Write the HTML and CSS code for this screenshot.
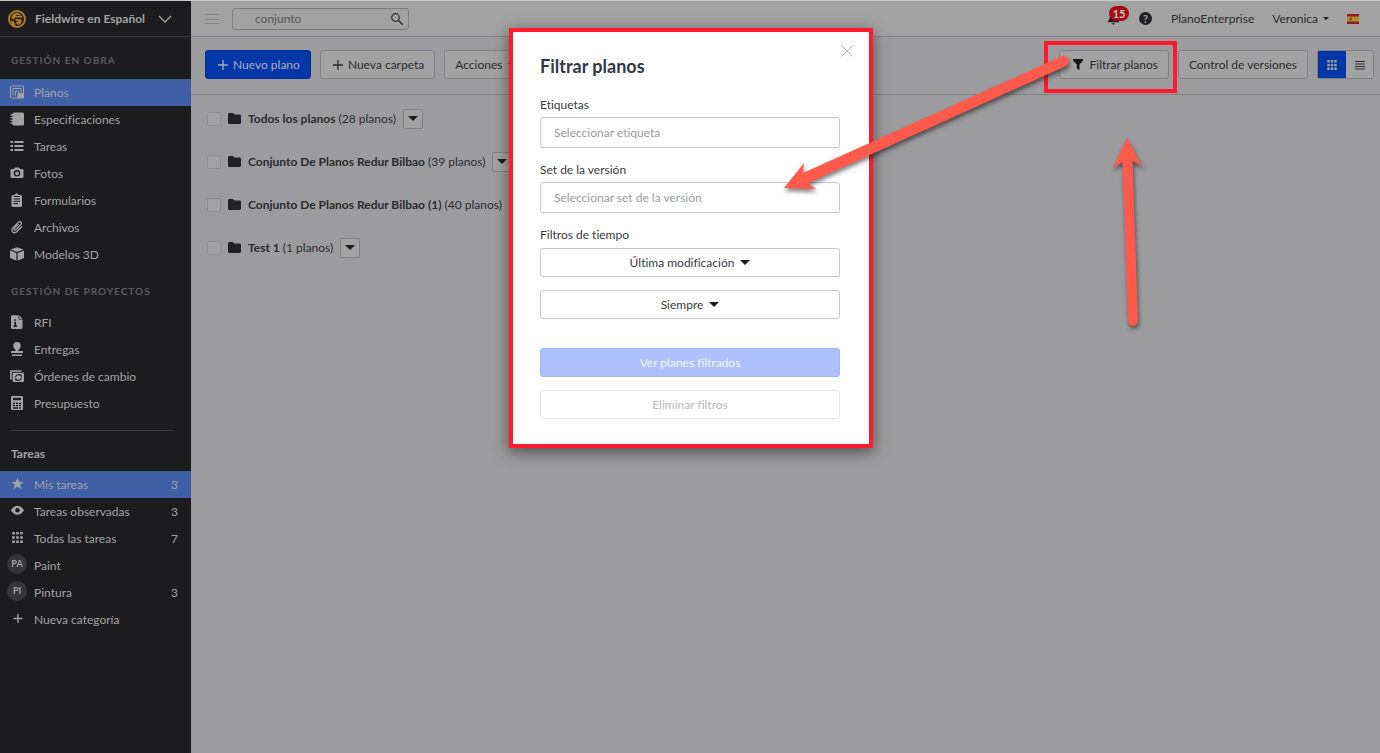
FILE: index.html
```html
<!DOCTYPE html>
<html lang="es">
<head>
    <meta charset="UTF-8">
    <meta name="viewport" content="width=device-width, initial-scale=1.0">
    <title>Planos - Fieldwire en Español</title>
    <link rel="stylesheet" href="styles.css">
</head>
<body>
    <aside class="sidebar">
        <button class="project">
            <svg class="logo" viewBox="0 0 18 18">
                <circle cx="9" cy="9" r="8" fill="#1c1c1e" stroke="#b17c22" stroke-width="2"/>
                <path d="M3.500 8.500C3.500 5 6 3 9 3S14 5 14.500 8L13 7.500H7L6 9.500z" fill="#b17c22"/>
                <path d="M7.500 9H9.500L10.500 10 11.500 9H13.500V12.500L11 15 8.500 14 8 12H10V11H7.500z" fill="#b17c22"/>
                <path d="M3 10.500L5.500 11 7 13.500 7.500 17 4 15z" fill="#b17c22"/>
                <path d="M8 5.500H12.500" stroke="#1c1c1e" stroke-width=".8"/>
            </svg>
            <span class="project-name">Fieldwire en Español</span>
            <svg class="chevron" viewBox="0 0 14 8"><path d="M1 1L7 7 13 1" fill="none" stroke="currentColor" stroke-width="1.3"/></svg>
        </button>

        <h2 class="section-title">Gestión en obra</h2>
        <nav class="works">
            <a href="#" class="item active">
                <svg class="icon" viewBox="0 0 14 14"><path d="M.5 1H13.500V13H.5z" fill="none" stroke="currentColor"/><path d="M3 10.500V3.500H11V7.500M5.500 10.500V6H8.500V8" fill="none" stroke="currentColor"/><path d="M7.500 8H13V13H7.500z" fill="currentColor"/></svg>
                <span>Planos</span>
            </a>
            <a href="#" class="item">
                <svg class="icon" viewBox="0 0 14 14"><path d="M3.500.5H13L14 1.500V12.500L13 13.500H3.500L2.500 12.500V1.500z" fill="currentColor"/><path d="M.5 3H4M.5 5.700H4M.5 8.400H4M.5 11H4" stroke="currentColor" stroke-width="1.300"/></svg>
                <span>Especificaciones</span>
            </a>
            <a href="#" class="item">
                <svg class="icon" viewBox="0 0 14 14"><path d="M.5 3H3M.5 7H3M.5 11H3M4.500 3H13.500M4.500 7H13.500M4.500 11H13.500" stroke="currentColor" stroke-width="2"/></svg>
                <span>Tareas</span>
            </a>
            <a href="#" class="item">
                <svg class="icon" viewBox="0 0 14 14"><path d="M1.500 3H4L5 1.500H9L10 3H12.500L13.500 4V11L12.500 12H1.500L.5 11V4z" fill="currentColor"/><circle cx="7" cy="7.300" r="2.600" fill="none" stroke="#1c1c1e" stroke-width="1.400"/></svg>
                <span>Fotos</span>
            </a>
            <a href="#" class="item">
                <svg class="icon" viewBox="0 0 14 14"><path d="M2.500 2H4.500L6 .3H7L8.500 2H11L12 3V13L11 14H2.500L1.500 13V3z" fill="currentColor"/><path d="M4 3.500H9.500M3.500 6H10M3.500 8.300H10M3.500 10.600H8" stroke="#1c1c1e"/></svg>
                <span>Formularios</span>
            </a>
            <a href="#" class="item">
                <svg class="icon" viewBox="0 0 14 14"><path d="M8.500 4L4.300 8.200C3.300 9.300 4.700 10.700 5.800 9.700L10.700 4.800C12.800 2.500 10.200.5 8.200 2.400L3 7.600C-.2 11 4 14.500 7 11.500L12 6.500" fill="none" stroke="currentColor" stroke-width="1.300"/></svg>
                <span>Archivos</span>
            </a>
            <a href="#" class="item">
                <svg class="icon" viewBox="0 0 14 14"><path d="M7 .3L13.500 2.500 7 5 .5 2.500zM0 3.600L6.400 6V13.500L0 11zM14 3.600L7.600 6V13.500L14 11z" fill="currentColor"/></svg>
                <span>Modelos 3D</span>
            </a>
        </nav>

        <h2 class="section-title">Gestión de proyectos</h2>
        <nav>
            <a href="#" class="item">
                <svg class="icon" viewBox="0 0 14 14"><path d="M2 .3H8.500V4.500H12.500V13L11.500 14H2L1 13V1zM9.300.3L12.500 3.700H9.300z" fill="currentColor"/><path d="M5 4.200V6M4 7.700H5.300V11.500M3.500 11.300H7" fill="none" stroke="#1c1c1e" stroke-width="1.500"/></svg>
                <span>RFI</span>
            </a>
            <a href="#" class="item">
                <svg class="icon" viewBox="0 0 14 14"><circle cx="7" cy="3.700" r="3.700" fill="currentColor"/><path d="M5 6H9L8.500 9H13V11H1V9H5.500zM2 12.500H12V14H2z" fill="currentColor"/></svg>
                <span>Entregas</span>
            </a>
            <a href="#" class="item">
                <svg class="icon" viewBox="0 0 14 14"><path d="M1 10.500V2H11.500" fill="none" stroke="currentColor" stroke-width="1.700"/><rect x="2.700" y="3.700" width="11.300" height="9.300" rx="1" fill="currentColor"/><path d="M5.500 8A3 2.800 0 0 1 11 7V5.500M11.300 9A3 2.800 0 0 1 5.800 10V11.500" fill="none" stroke="#1c1c1e" stroke-width="1.200"/></svg>
                <span>Órdenes de cambio</span>
            </a>
            <a href="#" class="item">
                <svg class="icon" viewBox="0 0 14 14"><rect x="1" width="12" height="14" rx="1" fill="currentColor"/><path d="M3 3H11" stroke="#1c1c1e" stroke-width="2.400"/><path d="M3 7.500H5M6 7.500H8M9 7.500H11M3 9.700H5M6 9.700H8M9 9.700H11M3 12H8M9 12H11" stroke="#1c1c1e" stroke-width="1.300"/></svg>
                <span>Presupuesto</span>
            </a>
        </nav>

        <hr class="divider">
        <h2 class="tasks-title">Tareas</h2>
        <nav>
            <a href="#" class="item active">
                <svg class="icon" viewBox="0 0 14 14"><path d="M7.500.8L9.200 5H13.700L10.100 7.800 11.500 12.300 7.500 9.600 3.500 12.300 4.900 7.800 1.300 5H5.800z" fill="currentColor"/></svg>
                <span>Mis tareas</span><span class="count">3</span>
            </a>
            <a href="#" class="item">
                <svg class="icon" viewBox="0 0 14 14"><path d="M.8 6.300Q4 1.800 7.500 1.800T14 6.300Q11 10.800 7.500 10.800T.8 6.300z" fill="currentColor"/><circle cx="7.500" cy="6.300" r="2.200" fill="#1c1c1e"/></svg>
                <span>Tareas observadas</span><span class="count">3</span>
            </a>
            <a href="#" class="item">
                <svg class="icon" viewBox="0 0 14 14"><path d="M3.500 1V12M7.500 1V12M11.500 1V12" stroke="currentColor" stroke-width="2.600" stroke-dasharray="2.600 1.600"/></svg>
                <span>Todas las tareas</span><span class="count">7</span>
            </a>
            <a href="#" class="item"><span class="avatar">PA</span><span>Paint</span></a>
            <a href="#" class="item"><span class="avatar">PI</span><span>Pintura</span><span class="count">3</span></a>
            <a href="#" class="item">
                <svg class="icon" viewBox="0 0 14 14"><path d="M8 2V11M3.500 6.500H12.500" stroke="currentColor" stroke-width="1.300"/></svg>
                <span>Nueva categoría</span>
            </a>
        </nav>
    </aside>

    <main class="main">
        <header class="topbar">
            <button class="menu" aria-label="Menú"><svg viewBox="0 0 14 12"><path d="M0 1.500H14M0 6.500H14M0 10.500H14" stroke="#838385"/></svg></button>
            <div class="search">
                <input type="text" aria-label="Buscar" value="conjunto">
                <svg viewBox="0 0 12 12"><circle cx="4.500" cy="4.500" r="3.800" fill="none" stroke="#2b2b2e" stroke-width="1.200"/><path d="M7.300 7.300L11.700 11.700" stroke="#2b2b2e" stroke-width="1.500"/></svg>
            </div>
            <button class="bell" aria-label="Notificaciones">
                <svg viewBox="0 0 14 14"><path d="M7 .5C4 .5 3 3 3 5.500S1 9 .5 10.500H13.500C13 9 11 8 11 5.500S10 .5 7 .5zM5 11.500H9L7 13.500z" fill="#1e2023"/></svg>
                <span class="badge">15</span>
            </button>
            <button class="help" aria-label="Ayuda">?</button>
            <a href="#" class="company">PlanoEnterprise</a>
            <button class="user">Veronica <span class="caret small"></span></button>
            <svg class="flag" viewBox="0 0 12 10"><path d="M0 0H12V10H0z" fill="#951a1f"/><path d="M0 2.500H12V7.500H0z" fill="#a8942a"/><path d="M2.500 3.500H5V6.500H2.500z" fill="#92531f"/></svg>
        </header>

        <div class="toolbar">
            <button class="btn primary"><svg class="plus" viewBox="0 0 10 10"><path d="M5 0V10M0 5H10" stroke="currentColor" stroke-width="1.300"/></svg>Nuevo plano</button>
            <button class="btn"><svg class="plus" viewBox="0 0 10 10"><path d="M5 0V10M0 5H10" stroke="currentColor" stroke-width="1.300"/></svg>Nueva carpeta</button>
            <button class="btn actions">Acciones <span class="caret small"></span></button>
            <div class="highlight">
                <button class="btn filter"><svg class="funnel" viewBox="0 0 10 11"><path d="M0 0H10V1.500L6.500 5.500V11L3.800 9.500V5.500L0 1.500z" fill="#151517"/></svg>Filtrar planos</button>
            </div>
            <button class="btn versions">Control de versiones</button>
            <div class="views">
                <button class="view selected" aria-label="Cuadrícula"><svg viewBox="0 0 10 10"><path d="M1.500 0V10M5 0V10M8.500 0V10" stroke="#a2a2a2" stroke-width="2.400" stroke-dasharray="2.600 1.100"/></svg></button>
                <button class="view" aria-label="Lista"><svg viewBox="0 0 10 10"><path d="M0 1.500H10M0 4H10M0 6.500H10M0 9H10" stroke="#2b2b2e" stroke-width="1"/></svg></button>
            </div>
        </div>

        <ul class="folders">
            <li class="folder">
                <input type="checkbox" id="f1">
                <svg viewBox="0 0 13 11"><path d="M1 0H5L6.500 1.500H12L13 2.500V10L12 11H1L0 10V1z" fill="#222224"/></svg>
                <label for="f1"><b>Todos los planos</b> (28 planos)</label>
                <button aria-label="Opciones"><span class="caret"></span></button>
            </li>
            <li class="folder">
                <input type="checkbox" id="f2">
                <svg viewBox="0 0 13 11"><path d="M1 0H5L6.500 1.500H12L13 2.500V10L12 11H1L0 10V1z" fill="#222224"/></svg>
                <label for="f2"><b>Conjunto De Planos Redur Bilbao</b> (39 planos)</label>
                <button aria-label="Opciones"><span class="caret"></span></button>
            </li>
            <li class="folder">
                <input type="checkbox" id="f3">
                <svg viewBox="0 0 13 11"><path d="M1 0H5L6.500 1.500H12L13 2.500V10L12 11H1L0 10V1z" fill="#222224"/></svg>
                <label for="f3"><b>Conjunto De Planos Redur Bilbao (1)</b> (40 planos)</label>
                <button aria-label="Opciones"><span class="caret"></span></button>
            </li>
            <li class="folder">
                <input type="checkbox" id="f4">
                <svg viewBox="0 0 13 11"><path d="M1 0H5L6.500 1.500H12L13 2.500V10L12 11H1L0 10V1z" fill="#222224"/></svg>
                <label for="f4"><b>Test 1</b> (1 planos)</label>
                <button aria-label="Opciones"><span class="caret"></span></button>
            </li>
        </ul>
    </main>

    <div class="overlay">
        <form class="modal" role="dialog" aria-labelledby="modal-title">
            <button type="button" class="close" aria-label="Cerrar"><svg viewBox="0 0 12 12"><path d="M.5.5L11.500 11.500M11.500.5L.5 11.500" stroke="#b9b9bc"/></svg></button>
            <h1 id="modal-title">Filtrar planos</h1>
            <label for="tag">Etiquetas</label>
            <input type="text" id="tag" placeholder="Seleccionar etiqueta">
            <label for="set">Set de la versión</label>
            <input type="text" id="set" placeholder="Seleccionar set de la versión">
            <label for="time">Filtros de tiempo</label>
            <div class="dropdown">
                <select id="time"><option>Última modificación</option></select>
                <span class="caret"></span>
            </div>
            <div class="dropdown">
                <select aria-label="Periodo"><option>Siempre</option></select>
                <span class="caret"></span>
            </div>
            <button type="submit" class="apply" disabled>Ver planes filtrados</button>
            <button type="reset" class="clear" disabled>Eliminar filtros</button>
        </form>
    </div>

    <svg class="arrows" viewBox="770 0 610 340">
        <path d="M784 188L804 163 803 173 1061 56.500A5.200 5.200 0 0 1 1066 66L808 183 816 189z" fill="#ff5a4c"/>
        <path d="M1127 138L1142 166 1132.500 161 1138 321A5 5 0 0 1 1128 321L1122.500 162 1113 168z" fill="#ff5a4c"/>
    </svg>
</body>
</html>
```
FILE: styles.css
```css
* {
    box-sizing: border-box;
}
body {
    margin: 0;
    min-height: 100vh;
    display: flex;
    position: relative;
    border-top: 1px solid #c8c8c8;
    background: #9c9c9e;
    color: #2b2b2e;
    font-family: Lato, sans-serif;
    font-size: 12px;
    line-height: 16px;
    font-variant-ligatures: none;
}
button, input, select {
    font: inherit;
    color: inherit;
    font-variant-ligatures: none;
}
button {
    padding: 0;
    border: none;
    background: none;
    cursor: pointer;
}
a {
    color: inherit;
    text-decoration: none;
}
svg {
    display: block;
    flex: none;
}
.caret {
    flex: none;
    border: 5px solid transparent;
    border-top-color: #1c1c1e;
    border-bottom: none;
}
.caret.small {
    border-width: 3px;
    border-bottom: none;
}

/* sidebar */
.sidebar {
    width: 191px;
    flex: none;
    background: #1c1c1e;
    color: #a3a3a5;
}
.project {
    display: flex;
    align-items: center;
    width: 100%;
    height: 36px;
    padding: 0 19px 0 8px;
    border-bottom: 1px solid #3a3a3c;
    font-weight: bold;
    text-align: left;
}
.logo {
    width: 18px;
    height: 18px;
    margin-right: 9px;
}
.project-name {
    flex: 1;
}
.chevron {
    width: 14px;
    height: 8px;
}
.section-title {
    margin: 0;
    padding: 15px 11px 10px;
    color: #5c5c5f;
    font-size: 10px;
    line-height: 16px;
    letter-spacing: 1px;
    text-transform: uppercase;
}
.works {
    margin-top: 1px;
}
.item {
    display: flex;
    align-items: center;
    height: 27px;
    padding: 0 13px 0 10px;
}
.item.active {
    background: #3f5fa6;
}
.icon {
    width: 14px;
    height: 14px;
    margin: 0 10px 2px 0;
}
.avatar {
    width: 20px;
    height: 20px;
    margin: 0 7px 4px -3px;
    border-radius: 50%;
    background: #363638;
    font-size: 9px;
    font-weight: bold;
    line-height: 20px;
    text-align: center;
}
.count {
    margin-left: auto;
}
.divider {
    margin: 13px 18px 0 11px;
    border: none;
    border-top: 1px solid #3a3a3c;
}
.tasks-title {
    margin: 0;
    padding: 15px 11px 9px;
    font-size: 12px;
}

/* top bar */
.main {
    flex: 1;
    min-width: 0;
}
.topbar {
    display: flex;
    align-items: center;
    height: 36px;
    padding: 0 21px 0 14px;
    border-bottom: 1px solid #828285;
    background: #a2a2a2;
}
.menu svg {
    width: 14px;
    height: 12px;
}
.search {
    display: flex;
    align-items: center;
    width: 177px;
    height: 22px;
    margin: 0 auto 0 13px;
    padding: 0 5px 0 22px;
    border: 1px solid #7d7d80;
    border-radius: 3px;
}
.search input {
    flex: 1;
    min-width: 0;
    padding: 0;
    border: none;
    outline: none;
    background: none;
    color: #555558;
}
.search svg {
    width: 12px;
    height: 12px;
}
.bell {
    position: relative;
    margin-right: 19px;
}
.bell svg {
    width: 13px;
    height: 14px;
}
.badge {
    position: absolute;
    top: -6px;
    left: 2px;
    width: 20px;
    border-radius: 8px;
    background: #a50a0d;
    color: #c4c4c4;
    font-size: 11px;
    font-weight: bold;
    line-height: 15px;
}
.help {
    width: 13px;
    height: 13px;
    margin-right: 19px;
    border-radius: 50%;
    background: #1e2023;
    color: #a2a2a2;
    font-size: 11px;
    font-weight: bold;
    line-height: 13px;
}
.company {
    margin-right: 18px;
}
.user {
    display: flex;
    align-items: center;
    gap: 5px;
    margin-right: 18px;
}
.flag {
    width: 12px;
    height: 10px;
}

/* toolbar */
.toolbar {
    display: flex;
    align-items: center;
    gap: 9px;
    height: 58px;
    padding: 0 6px 2px 14px;
    border-bottom: 1px solid #828285;
}
.btn {
    display: flex;
    align-items: center;
    height: 29px;
    padding: 0 10px;
    border: 1px solid #808083;
    border-radius: 3px;
    background: #a2a2a2;
    white-space: nowrap;
}
.btn.primary {
    border-color: #032f93;
    background: #0336a6;
    color: #a8afbf;
}
.plus {
    width: 10px;
    height: 10px;
    margin: 0 5px 0 2px;
}
.actions {
    gap: 5px;
}
.highlight {
    position: relative;
    margin-left: auto;
}
.highlight::after {
    content: "";
    position: absolute;
    inset: -9px -8px -14px -15px;
    border: 4px solid #fe1b2e;
    pointer-events: none;
}
.btn.filter {
    padding-left: 13px;
}
.funnel {
    width: 10px;
    height: 11px;
    margin-right: 6px;
}
.views {
    display: flex;
    height: 29px;
    border: 1px solid #808083;
    border-radius: 3px;
    background: #a2a2a2;
}
.view {
    display: grid;
    place-items: center;
    width: 27px;
}
.view.selected {
    width: 28px;
    background: #0336a6;
}
.view svg {
    width: 10px;
    height: 10px;
}

/* folder list */
.folders {
    margin: 0;
    padding: 2px 16px;
    list-style: none;
}
.folder {
    display: flex;
    align-items: center;
    height: 43px;
    white-space: nowrap;
}
.folder input {
    appearance: none;
    width: 14px;
    height: 14px;
    margin: 0 7px 0 0;
    border: 1px solid #8e8e90;
    border-radius: 2px;
    background: #a2a2a2;
}
.folder svg {
    width: 13px;
    height: 11px;
    margin-right: 7px;
}
.folder button {
    display: grid;
    place-items: center;
    width: 20px;
    height: 20px;
    margin-left: 7px;
    border: 1px solid #808083;
    border-radius: 2px;
    background: #a2a2a2;
}

/* filter dialog */
.overlay {
    position: absolute;
    inset: 0;
    display: flex;
    justify-content: center;
    align-items: flex-start;
    padding: 27px 0 0 2px;
}
.modal {
    position: relative;
    display: flex;
    flex-direction: column;
    width: 364px;
    padding: 24px 29px 25px 27px;
    border: 4px solid #fe1b2e;
    background: #fff;
    box-shadow: 0 4px 14px rgba(0, 0, 0, 0.5);
    color: #3a3a3d;
}
.modal h1 {
    margin: 0 0 21px;
    color: #343846;
    font-size: 18px;
    line-height: 20px;
}
.modal label {
    margin-bottom: 4px;
}
.modal input {
    height: 31px;
    margin-bottom: 14px;
    padding: 0 13px;
    border: 1px solid #c6c6c8;
    border-radius: 3px;
}
.modal input::placeholder {
    color: #9a9a9d;
}
.dropdown {
    display: flex;
    justify-content: center;
    align-items: center;
    gap: 6px;
    height: 29px;
    margin: 1px 0 12px;
    border: 1px solid #c8c8cc;
    border-radius: 3px;
}
.dropdown select {
    appearance: none;
    field-sizing: content;
    padding: 0;
    border: none;
    background: none;
}
.close {
    position: absolute;
    top: 13px;
    right: 16px;
}
.close svg {
    width: 12px;
    height: 12px;
}
.apply, .clear {
    height: 29px;
    border: 1px solid #e6e6e8;
    border-radius: 3px;
    color: #b9b9bb;
}
.apply {
    margin: 17px 0 13px;
    border-color: #a3b5ec;
    background: #adc0ff;
    color: #f6f8ff;
}

/* guide arrows */
.arrows {
    position: absolute;
    top: -1px;
    right: 0;
    width: 610px;
    height: 340px;
    pointer-events: none;
    filter: drop-shadow(1px 3px 2px rgba(0, 0, 0, 0.5));
}
```
